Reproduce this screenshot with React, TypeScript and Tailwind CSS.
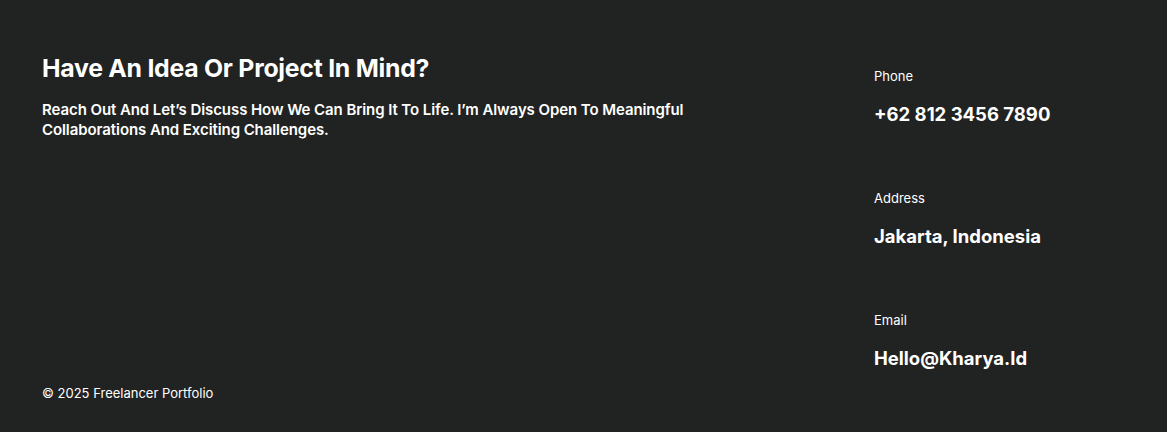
import React from 'react';

const contacts = [
  { label: 'Phone', value: '+62 812 3456 7890' },
  { label: 'Address', value: 'Jakarta, Indonesia' },
  { label: 'Email', value: 'Hello@Kharya.Id' },
];

export default function App() {
  return (
    <footer
      className="w-full h-[432px] bg-[#212322] text-white flex justify-between pl-[42px]"
      style={{ fontFamily: 'Inter, "Noto Sans", sans-serif' }}
    >
      <div className="flex flex-col justify-between pt-[53px] pb-[29px]">
        <div>
          <h2 className="text-[24.8px] leading-[30px] font-bold tracking-[-0.25px]">Have An Idea Or Project In Mind?</h2>
          <p className="mt-[17px] max-w-[660px] text-[15px] leading-[20px] font-semibold tracking-[-0.08px]">
            Reach Out And Let’s Discuss How We Can Bring It To Life. I’m Always Open To Meaningful Collaborations And Exciting Challenges.
          </p>
        </div>
        <p className="text-[13px] leading-[20px]">© 2025 Freelancer Portfolio</p>
      </div>

      <div className="w-[293px] pt-[66px] flex flex-col gap-[62px]">
        {contacts.map((c) => (
          <div key={c.label} className="flex flex-col gap-[16px]">
            <span className="text-[13px] leading-[20px]">{c.label}</span>
            <span className="text-[18.5px] leading-[24px] font-bold">{c.value}</span>
          </div>
        ))}
      </div>
    </footer>
  );
}
